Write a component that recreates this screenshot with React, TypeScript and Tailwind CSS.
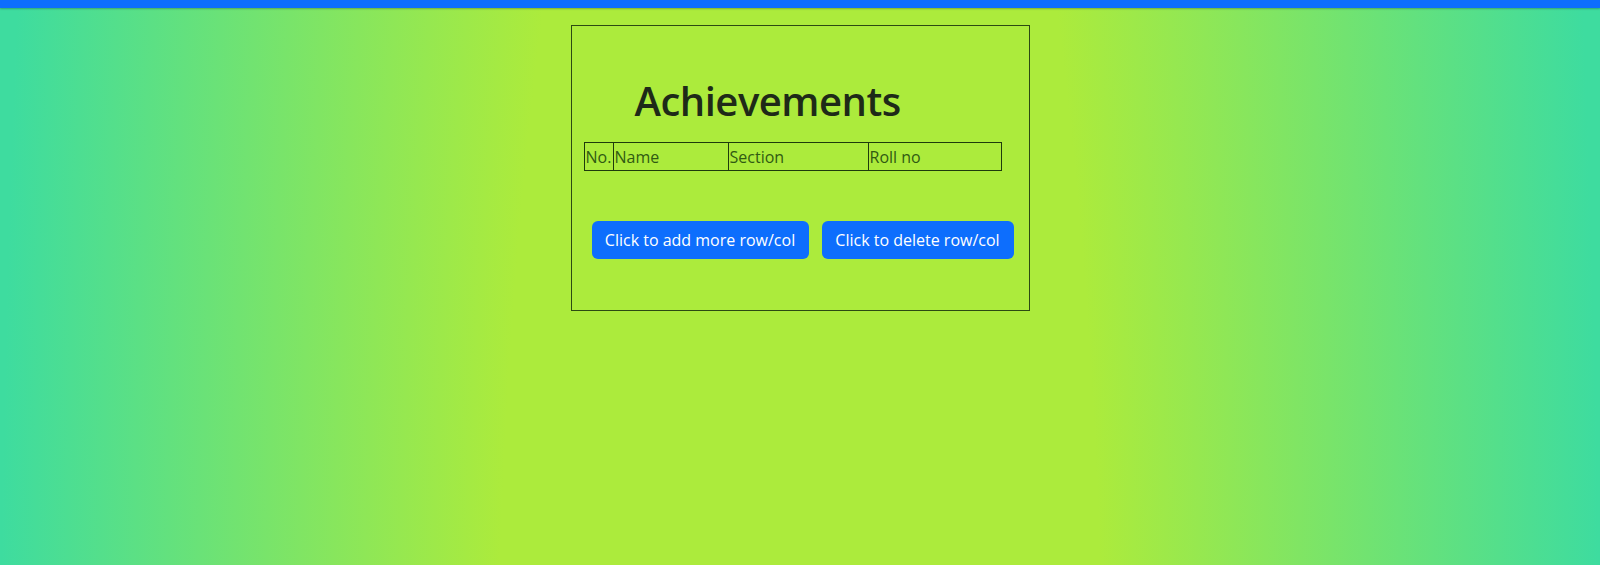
import React from 'react'

export default function App() {
    const cols = [
        { label: 'No.', w: 'w-[29px]' },
        { label: 'Name', w: 'w-[115px]' },
        { label: 'Section', w: 'w-[140px]' },
        { label: 'Roll no', w: 'w-[133px]' },
    ]

    return (
        <div className="min-h-screen bg-[radial-gradient(ellipse_800px_3900px_at_50%_805px,#aceb3c_38%,#3edc9f_100%)] font-['Open_Sans',sans-serif]">
            <div className="h-2 bg-[#0d6efd] shadow-[0_1px_2px_rgba(0,0,0,0.25)]" />

            <div className="mx-auto mt-[17px] h-[286px] w-[459px] border border-[#2c4a12]">
                <h1 className="ml-[63px] mt-[51px] text-[40px] font-semibold leading-[48px] tracking-[-0.5px] text-[#1e2a18]">
                    Achievements
                </h1>

                <table className="ml-[12px] mt-[17px] w-[417px] table-fixed border-collapse text-[16px] text-[#305a12]">
                    <tbody>
                        <tr className="h-[28px]">
                            {cols.map((c) => (
                                <td key={c.label} className={`${c.w} border border-[#1e3a0c] p-0 pt-px pl-px leading-6`}>
                                    {c.label}
                                </td>
                            ))}
                        </tr>
                    </tbody>
                </table>

                <div className="ml-[20px] mt-[50px] flex gap-[13px]">
                    <button className="h-[38px] w-[217px] rounded-md bg-[#0d6efd] text-[16px] text-white">
                        Click to add more row/col
                    </button>
                    <button className="h-[38px] w-[192px] rounded-md bg-[#0d6efd] text-[16px] text-white">
                        Click to delete row/col
                    </button>
                </div>
            </div>
        </div>
    )
}
